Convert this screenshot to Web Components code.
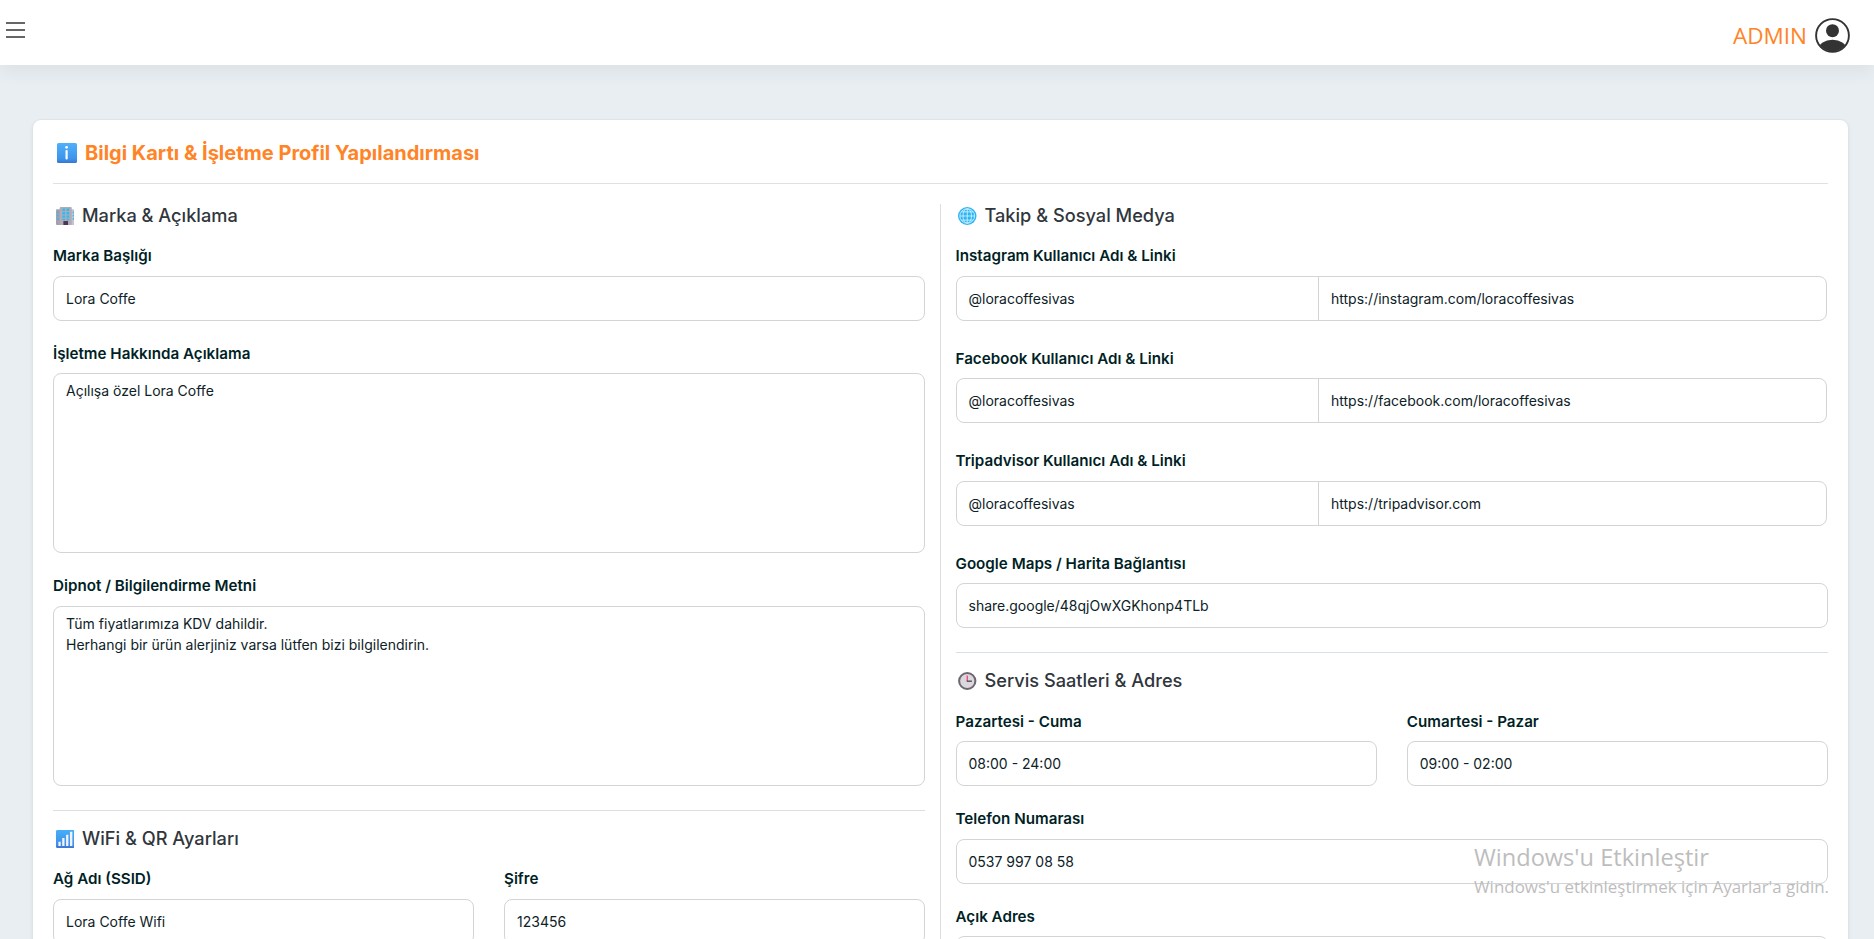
<!DOCTYPE html>
<html lang="tr">
<head>
<meta charset="utf-8">
<title>Bilgi Kartı</title>
<style>
  html, body { height: 100%; }
  body {
    margin: 0;
    overflow: hidden;
    background: #e9eef3;
    color: #011f26;
    font-family: Inter, "Liberation Sans", sans-serif;
    font-size: 14px;
  }
</style>
</head>
<body>
<admin-layout>
  <top-bar slot="header" user="ADMIN"></top-bar>
  <info-card>
    <card-title slot="title" icon="info">Bilgi Kartı &amp; İşletme Profil Yapılandırması</card-title>
    <form-section slot="left" icon="office" heading="Marka &amp; Açıklama">
      <form-field label="Marka Başlığı" style="--gap: 21px">Lora Coffe</form-field>
      <form-field label="İşletme Hakkında Açıklama" multiline style="--gap: 22px; --shift: 1px">Açılışa özel Lora Coffe</form-field>
      <form-field label="Dipnot / Bilgilendirme Metni" multiline style="--gap: 24px">Tüm fiyatlarımıza KDV dahildir.
Herhangi bir ürün alerjiniz varsa lütfen bizi bilgilendirin.</form-field>
    </form-section>
    <form-section slot="left" icon="signal" heading="WiFi &amp; QR Ayarları" divided>
      <field-row>
        <form-field label="Ağ Adı (SSID)">Lora Coffe Wifi</form-field>
        <form-field label="Şifre">123456</form-field>
      </field-row>
    </form-section>
    <form-section slot="right" icon="globe" heading="Takip &amp; Sosyal Medya">
      <form-field label="Instagram Kullanıcı Adı &amp; Linki" split style="--gap: 26.33px">@loracoffesivas<span slot="link">https://instagram.com/loracoffesivas</span></form-field>
      <form-field label="Facebook Kullanıcı Adı &amp; Linki" split style="--gap: 26.33px; --shift: 1px">@loracoffesivas<span slot="link">https://facebook.com/loracoffesivas</span></form-field>
      <form-field label="Tripadvisor Kullanıcı Adı &amp; Linki" split style="--gap: 26.34px">@loracoffesivas<span slot="link">https://tripadvisor.com</span></form-field>
      <form-field label="Google Maps / Harita Bağlantısı" style="--gap: 24px; --shift: 1px">share.google/48qjOwXGKhonp4TLb</form-field>
    </form-section>
    <form-section slot="right" icon="clock" heading="Servis Saatleri &amp; Adres" divided>
      <field-row style="--gap: 22px; --shift: 1px">
        <form-field label="Pazartesi - Cuma">08:00 - 24:00</form-field>
        <form-field label="Cumartesi - Pazar">09:00 - 02:00</form-field>
      </field-row>
      <form-field label="Telefon Numarası" style="--gap: 21px">0537 997 08 58</form-field>
      <form-field label="Açık Adres" multiline style="--shift: 1px"></form-field>
    </form-section>
  </info-card>
  <activation-note slot="overlay"></activation-note>
</admin-layout>

<script>
const ICONS = {
  info: `
    <defs><linearGradient id="g" x2="0" y2="1"><stop offset="0" stop-color="#4fb0fb"/><stop offset=".8" stop-color="#3d93ea"/><stop offset="1" stop-color="#3575cf"/></linearGradient></defs>
    <rect width="20" height="20" rx="1.6" fill="url(#g)"/>
    <circle cx="9.6" cy="4.3" r="1.4" fill="#fff"/>
    <rect x="8.5" y="7" width="2.2" height="9.6" rx="1" fill="#fff"/>`,
  office: `
    <rect y="2.6" width="6" height="17.4" rx="1" fill="#a79fac"/>
    <rect x="14" y="2.6" width="6" height="17.4" rx="1" fill="#c9c2cc"/>
    <rect x="4" width="13" height="20" rx="1" fill="#b3aab8"/>
    <path d="M7 1.8h2.8v2.6H7zM11.4 1.8h2.8v2.6h-2.8zM7 5.6h2.8v2.6H7zM11.4 5.6h2.8v2.6h-2.8zM7 9.4h2.8V12H7zM11.4 9.4h2.8V12h-2.8zM7 13h2.8v1.6H7zM11.4 13h2.8v1.6h-2.8zM1.2 5h1.8v2H1.2zM1.2 8.6h1.8v2H1.2zM1.2 12.2h1.8v2H1.2zM18 5h1.4v2H18zM18 8.6h1.4v2H18zM18 12.2h1.4v2H18z" fill="#29bdf5"/>
    <rect x="8" y="15.6" width="5" height="4.4" fill="#4b3752"/>`,
  signal: `
    <defs><linearGradient id="g" x2="0" y2="1"><stop offset="0" stop-color="#46aef8"/><stop offset=".8" stop-color="#418fe6"/><stop offset="1" stop-color="#3d73cb"/></linearGradient></defs>
    <rect width="20" height="20" rx="1.5" fill="url(#g)"/>
    <path d="M2.6 13h2.5v4.7H2.6zM6.7 9h2.5v8.7H6.7zM10.9 5.2h2.5v12.5h-2.5zM15.1 2h2.6v15.7h-2.6z" fill="#eef3ff"/>`,
  globe: `
    <circle cx="10" cy="10" r="10" fill="#2fb4f3"/>
    <g fill="none" stroke="#d8f4ff" stroke-width=".9">
      <ellipse cx="10" cy="10" rx="4.6" ry="8"/><circle cx="10" cy="10" r="8"/>
      <path d="M10 2v16M2 10h16M3.8 5.4h12.4M3.8 14.6h12.4"/>
    </g>`,
  clock: `
    <circle cx="10" cy="10" r="8.8" fill="#dcd7df" stroke="#6d6770" stroke-width="2.2"/>
    <path d="M10 4v6" stroke="#f04864" stroke-width="1.4"/>
    <path d="M9.4 10.2H15" stroke="#453a50" stroke-width="1.4"/>`
};

function drawIcon(name) {
  return `<svg viewBox="0 0 20 20" preserveAspectRatio="none">${ICONS[name] || ""}</svg>`;
}

class AdminLayout extends HTMLElement {
  constructor() {
    super();
    this.attachShadow({ mode: "open" }).innerHTML = `
      <style>
        :host { display: flex; flex-direction: column; height: 100vh; overflow: hidden; position: relative; }
        main { flex: 1; min-height: 0; padding: 54px 25px 0 32px; }
      </style>
      <slot name="header"></slot>
      <main><slot></slot></main>
      <slot name="overlay"></slot>
    `;
  }
}

class TopBar extends HTMLElement {
  connectedCallback() {
    this.attachShadow({ mode: "open" }).innerHTML = `
      <style>
        :host {
          display: flex;
          flex: none;
          justify-content: space-between;
          height: 65px;
          box-sizing: border-box;
          padding: 0 24px 0 6px;
          background: #fff;
          box-shadow: 0 8px 16px rgba(0, 0, 0, 0.05);
        }
        .menu { width: 19px; height: 16px; margin-top: 22px; }
        .user { display: flex; align-items: center; gap: 8px; height: 70px; }
        .name { padding-top: 2px; color: #ff8427; font: 22.5px/1 "Open Sans", sans-serif; }
        .avatar { width: 35px; height: 35px; }
      </style>
      <svg class="menu" viewBox="0 0 19 16"><path d="M0 1h19M0 8h19M0 15h19" stroke="#666" stroke-width="2"/></svg>
      <div class="user">
        <span class="name">${this.getAttribute("user")}</span>
        <svg class="avatar" viewBox="0 0 35 35">
          <defs><clipPath id="c"><circle cx="17.5" cy="17.5" r="16"/></clipPath></defs>
          <circle cx="17.5" cy="17.5" r="16.4" fill="#fff" stroke="#333" stroke-width="1.9"/>
          <circle cx="17.5" cy="12.7" r="6.5" fill="#333"/>
          <ellipse cx="17.5" cy="31" rx="14" ry="9.2" fill="#333" clip-path="url(#c)"/>
        </svg>
      </div>
    `;
  }
}

class InfoCard extends HTMLElement {
  constructor() {
    super();
    this.attachShadow({ mode: "open" }).innerHTML = `
      <style>
        :host {
          display: block;
          box-sizing: border-box;
          height: 1000px;
          padding: 0 20px;
          background: #fff;
          border: 1px solid #dde3e7;
          border-radius: 9px;
          box-shadow: 0 2px 4px rgba(0, 0, 0, 0.06);
        }
        .columns { display: grid; grid-template-columns: 872px 1px 872.5px; gap: 14.75px; margin-top: 20px; }
        .line { background: #dbdfe3; height: 800px; }
      </style>
      <slot name="title"></slot>
      <div class="columns">
        <div><slot name="left"></slot></div>
        <div class="line"></div>
        <div><slot name="right"></slot></div>
      </div>
    `;
  }
}

class CardTitle extends HTMLElement {
  connectedCallback() {
    this.attachShadow({ mode: "open" }).innerHTML = `
      <style>
        :host {
          display: flex;
          align-items: center;
          gap: 8px;
          height: 64px;
          box-sizing: border-box;
          padding: 3px 0 0 4px;
          border-bottom: 1px solid #dee2e6;
          color: #ff8427;
          font-size: 20px;
          font-weight: 700;
        }
        svg { width: 20px; height: 20px; }
      </style>
      ${drawIcon(this.getAttribute("icon"))}
      <span><slot></slot></span>
    `;
  }
}

class FormSection extends HTMLElement {
  connectedCallback() {
    this.attachShadow({ mode: "open" }).innerHTML = `
      <style>
        :host { display: block; }
        :host([divided]) { border-top: 1px solid #d8e0e6; }
        h5 {
          display: flex;
          align-items: center;
          gap: 8px;
          height: 22px;
          margin: 0 0 19px;
          padding: 2px 0 0 2.5px;
          box-sizing: border-box;
          color: #30363c;
          font-size: 18.2px;
          font-weight: 500;
        }
        :host([divided]) h5 { margin-top: 16px; }
        svg { width: 18.5px; height: 18px; }
        span { margin-top: -2px; }
      </style>
      <h5>${drawIcon(this.getAttribute("icon"))}<span>${this.getAttribute("heading").replace("&", "&amp;")}</span></h5>
      <slot></slot>
    `;
  }
}

class FieldRow extends HTMLElement {
  constructor() {
    super();
    this.attachShadow({ mode: "open" }).innerHTML = `
      <style>
        :host { display: grid; grid-template-columns: 1fr 1fr; gap: 30px; margin-bottom: var(--gap, 0); }
        ::slotted(*) { --gap: 0px; }
      </style>
      <slot></slot>
    `;
  }
}

class FormField extends HTMLElement {
  connectedCallback() {
    const split = this.hasAttribute("split");
    this.attachShadow({ mode: "open" }).innerHTML = `
      <style>
        :host { display: block; margin-bottom: var(--gap, 0); }
        .label {
          box-sizing: border-box;
          height: 31px;
          padding-top: var(--shift, 0);
          line-height: 22px;
          font-size: 15.2px;
          font-weight: 600;
        }
        .control {
          display: flex;
          box-sizing: border-box;
          height: 45px;
          border: 1px solid #d2d4d6;
          border-radius: 8px;
          line-height: 21px;
          font-size: 14px;
          color: #0d2227;
          white-space: pre-line;
        }
        .control > div { flex: 1; padding: 11px 12px; }
        :host([multiline]) .control { height: 180px; }
        :host([multiline]) .control > div { padding-top: 6px; }
        :host([split]) .control { margin-right: 1px; }
        :host([split]) .control > div { flex: 0 0 361.5px; box-sizing: border-box; }
        :host([split]) .control > .link { flex: 1; border-left: 1px solid #d2d4d6; }
      </style>
      <div class="label">${this.getAttribute("label").replace("&", "&amp;")}</div>
      <div class="control">
        <div><slot></slot></div>
        ${split ? '<div class="link"><slot name="link"></slot></div>' : ""}
      </div>
    `;
  }
}

// Windows activation text in the corner of the screen
class ActivationNote extends HTMLElement {
  constructor() {
    super();
    this.attachShadow({ mode: "open" }).innerHTML = `
      <style>
        :host {
          position: absolute;
          left: 1474px;
          top: 840px;
          color: #bdbdbd;
          font-family: "Open Sans", sans-serif;
          white-space: nowrap;
        }
        .big { font-size: 23.6px; line-height: 34px; }
        .small { font-size: 16.93px; line-height: 26px; }
      </style>
      <div class="big">Windows'u Etkinleştir</div>
      <div class="small">Windows'u etkinleştirmek için Ayarlar'a gidin.</div>
    `;
  }
}

customElements.define("admin-layout", AdminLayout);
customElements.define("top-bar", TopBar);
customElements.define("info-card", InfoCard);
customElements.define("card-title", CardTitle);
customElements.define("form-section", FormSection);
customElements.define("field-row", FieldRow);
customElements.define("form-field", FormField);
customElements.define("activation-note", ActivationNote);
</script>
</body>
</html>
